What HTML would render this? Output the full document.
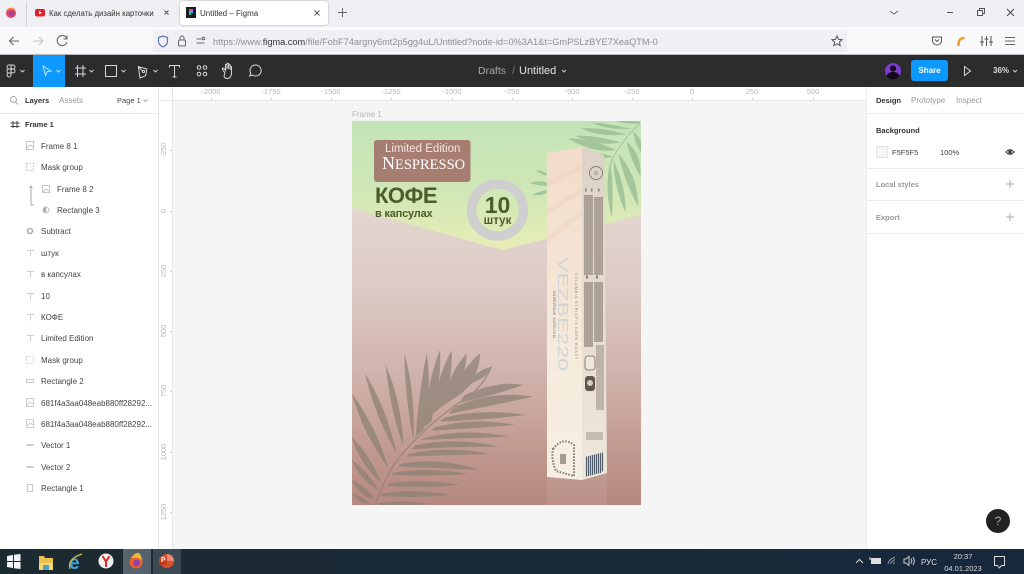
<!DOCTYPE html>
<html><head><meta charset="utf-8"><title>Untitled – Figma</title>
<style>
html,body{margin:0;padding:0;width:1024px;height:574px;overflow:hidden;background:#fff}
body{font-family:"Liberation Sans","Noto Sans CJK SC",sans-serif;position:relative;filter:blur(.35px)}
.a,.t{position:absolute}
.t{white-space:nowrap;line-height:12px;height:12px}
svg{position:absolute;overflow:visible}
.l{font-size:8px;color:#444;margin-top:1px}
.r{font-size:7.500px;color:#b5b5b5;width:40px;text-align:center}
.v{font-size:7.500px;color:#b5b5b5;width:30px;text-align:center;transform:rotate(-90deg);left:149px}
.i{stroke:#c4c4c4;fill:none;stroke-width:1}
</style></head><body>

<!-- browser chrome -->
<div class="a" style="left:0;top:0;width:1024px;height:27px;background:#f0f0f4"></div>
<div class="a" style="left:0;top:27px;width:1024px;height:27px;background:#f9f9fb"></div>
<div class="a" style="left:153px;top:30px;width:694px;height:22px;background:#f0f0f4"></div>
<div class="a" style="left:26px;top:2px;width:1px;height:24px;background:#d4d4d8"></div>
<svg style="left:0;top:0" width="1024" height="54">
<circle cx="11" cy="13" r="5" fill="#d9486f"/><circle cx="11.500" cy="13.500" r="2.600" fill="#a33fa0"/><path d="M7 10q4-3 8 0" stroke="#f58a3c" fill="none" stroke-width="1.600"/>
<rect x="35" y="9" width="10" height="7.500" rx="2" fill="#e3202a"/><path d="M39 11l3 1.700-3 1.700z" fill="#fff"/>
<path d="M164.500 10.500l4 4m0-4l-4 4" stroke="#555" stroke-width="1"/>
<path d="M338 12.500h9M342.500 8v9" stroke="#666" stroke-width="1"/>
<path d="M890 11l4 3 4-3" stroke="#666" fill="none"/>
<path d="M947 12.500h6" stroke="#555"/>
<rect x="977.500" y="10.500" width="5" height="5" fill="none" stroke="#555"/><path d="M979.500 10.500v-2h5v5h-2" fill="none" stroke="#555"/>
<path d="M1007 9l7 7m0-7l-7 7" stroke="#444"/>
<path d="M19 41H9.500m4-4l-4 4 4 4" stroke="#666" fill="none" stroke-width="1.100"/>
<path d="M33 41h10m-4-4l4 4-4 4" stroke="#c4c4c8" fill="none" stroke-width="1.100"/>
<path d="M66.500 38a5 5 0 1 0 .5 4M67 35.500v3.500h-3.500" stroke="#666" fill="none" stroke-width="1.100"/>
<path d="M163 36l4.500 1.500v4c0 3-2.500 4.500-4.500 5.500-2-1-4.500-2.500-4.500-5.500v-4z" fill="none" stroke="#5a74b8" stroke-width="1.200"/>
<rect x="178.500" y="40" width="7" height="6" rx="1" fill="none" stroke="#666"/><path d="M180 40v-2a2 2 0 0 1 4 0v2" fill="none" stroke="#666"/>
<path d="M196.500 39h5M196.500 43h8" stroke="#666"/><circle cx="203.500" cy="38.500" r="1.300" fill="none" stroke="#666"/>
<path d="M837 36l1.500 3.300 3.600.4-2.700 2.400.8 3.500-3.200-1.800-3.200 1.800.8-3.500-2.700-2.400 3.600-.4z" fill="none" stroke="#555"/>
<path d="M932.500 37h9v3.500a4.500 4.500 0 0 1-9 0z" fill="none" stroke="#555"/><path d="M935 39.500l2 2 2-2" fill="none" stroke="#555"/>
<path d="M958.500 46c0-5 1-8 6-8" stroke="#eda32b" fill="none" stroke-width="2.600"/>
<path d="M982 36v10M986.500 36v10M991 36v10" stroke="#555"/><path d="M980 42h4M984.500 39h4M989 42h4" stroke="#555"/>
<path d="M1005 37.500h10M1005 41h10M1005 44.500h10" stroke="#666"/>
</svg>
<div class="a" style="left:180px;top:1px;width:148px;height:24px;background:#fff;border-radius:3px;box-shadow:0 0 2px rgba(0,0,0,.3)"></div>
<svg style="left:0;top:0" width="330" height="27"><rect x="186" y="7" width="10" height="11" fill="#1c1c1c"/><rect x="189" y="9" width="2" height="2" fill="#e9553d"/><rect x="191" y="9" width="2" height="2" fill="#a259ff"/><rect x="189" y="11" width="2" height="2" fill="#1abcfe"/><rect x="191" y="11" width="2" height="2" fill="#1abcfe"/><rect x="189" y="13" width="2" height="2" fill="#0acf83"/><path d="M314.500 10.500l5 5m0-5l-5 5" stroke="#555"/></svg>
<div class="t" style="left:49px;top:8px;font-size:7.800px;color:#333;width:109px;overflow:hidden">Как сделать дизайн карточки</div>
<div class="t" style="left:200px;top:8px;font-size:8px;color:#333">Untitled – Figma</div>
<div class="t" style="left:213px;top:36px;font-size:9.230px;color:#8e8e93">https://www.<span style="color:#333">figma.com</span>/file/FobF74argny6mt2p5gg4uL/Untitled?node-id=0%3A1&amp;t=GmPSLzBYE7XeaQTM-0</div>

<!-- figma toolbar -->
<div class="a" style="left:0;top:54px;width:1024px;height:33px;background:#2c2c2c;border-top:1px solid #bbb;box-sizing:border-box"></div>
<div class="a" style="left:33px;top:55px;width:32px;height:32px;background:#0d99ff"></div>
<svg style="left:0;top:55px" width="1024" height="32" fill="none" stroke="#d8d8d8" stroke-width="1">
<path d="M11 10H9a2 2 0 0 0 0 4h2zM11 10h2a2 2 0 0 1 0 4h-2zM11 14H9a2 2 0 0 0 0 4h2zM11 18H9a2 2 0 1 0 2 2z"/><circle cx="13" cy="16" r="2"/>
<path d="M20.500 15l2 2 2-2M89.500 15l2 2 2-2M121.500 15l2 2 2-2M153.500 15l2 2 2-2" stroke-width=".9"/>
<path d="M77.500 10v12M83 10v12M75 13h11M75 19h11"/>
<rect x="105.500" y="10.500" width="11" height="11"/>
<path d="M139 11l8 3.500-2 6.500-6 1.500z M139 11l3.500 5" transform="rotate(-8 143 16)"/><circle cx="143.500" cy="16.500" r="1.100"/>
<path d="M169.500 12.500v-2h10v2M174.500 10.500v11.500M172.500 22h4"/>
<circle cx="199" cy="12.500" r="1.800"/><circle cx="205" cy="12.500" r="1.800"/><circle cx="199" cy="19" r="1.800"/><circle cx="205" cy="19" r="1.800"/>
<path d="M225 18l-2.500-3.500c-.7-1 .6-1.800 1.400-.9l1.600 2V10c0-1 1.500-1 1.500 0v4-5c0-1 1.600-1 1.600 0v5-4c0-1 1.500-1 1.500 0v5-3c0-1 1.400-1 1.400 0v6c0 3-1.500 5.500-4 5.500s-3-1-3.500-2.500z"/>
<path d="M255.500 10a5.500 5.500 0 1 1-3 10l-2.800 1 1-2.800a5.500 5.500 0 0 1 4.800-8.200z"/>
<path d="M562 15l2 2 2-2" stroke="#ccc"/>
<path d="M964.500 11.500l6 4.500-6 4.500z"/>
<path d="M1013 15l2 2 2-2" stroke="#ccc"/>
<circle cx="893" cy="16" r="8" fill="#7b3bd1" stroke="none"/><circle cx="893" cy="13.500" r="3.100" fill="#170a22" stroke="none"/><path d="M886.500 21c1-3 3.500-4 6.500-4s5.500 1 6.500 4a8 8 0 0 1-13 0z" fill="#120818" stroke="none"/>
</svg>
<svg style="left:33px;top:55px" width="32" height="32" fill="none" stroke="#bfe3ff"><path d="M10 11l8 5-4 .7-1.500 3.800z"/><path d="M23.500 15l2 2 2-2"/></svg>
<div class="t" style="left:478px;top:65px;font-size:10.500px;color:#a8a8a8">Drafts</div>
<div class="t" style="left:512px;top:65px;font-size:11px;color:#777">/</div>
<div class="t" style="left:519px;top:65px;font-size:11px;color:#e4e4e4">Untitled</div>
<div class="a" style="left:911px;top:60px;width:37px;height:21px;background:#0d99ff;border-radius:3px;color:#fff;font-size:8px;font-weight:bold;line-height:21px;text-align:center">Share</div>
<div class="t" style="left:993px;top:65px;font-size:8px;font-weight:bold;color:#ddd">36%</div>

<!-- left panel -->
<div class="a" style="left:0;top:87px;width:158px;height:462px;background:#fff;border-right:1px solid #e5e5e5"></div>
<div class="a" style="left:0;top:113px;width:158px;height:1px;background:#e8e8e8"></div>
<svg style="left:0;top:87px" width="158" height="30"><circle cx="13.500" cy="12.500" r="3" fill="none" stroke="#aaa"/><path d="M15.500 15l2.500 2.500M143.500 12.500l2 2 2-2" stroke="#aaa" fill="none"/></svg>
<div class="t" style="left:25px;top:95px;font-size:7.500px;font-weight:bold;color:#333">Layers</div>
<div class="t" style="left:59px;top:95px;font-size:8px;color:#999">Assets</div>
<div class="t" style="left:117px;top:95px;font-size:7.500px;color:#444">Page 1</div>

<svg style="left:0;top:0" width="60" height="500">
<path d="M13 121v7M17 121v7M10.500 123h9M10.500 126.500h9" stroke="#444" fill="none"/>
<g class="i">
<rect x="26.500" y="141.500" width="7" height="8"/><path d="M27 148l3-3 3 2"/>
<rect x="26.500" y="163.500" width="7" height="7" stroke-dasharray="1.500 1.500"/>
<path d="M31 186v19h3M29.500 188l1.500-2 1.500 2" stroke="#aaa"/>
<rect x="42.500" y="185.500" width="7" height="7"/><path d="M43 192l3-3 3 2"/>
<circle cx="46" cy="210" r="3"/><path d="M46 207a3 3 0 0 0 0 6z" fill="#aaa"/>
<circle cx="30" cy="231" r="2.500" stroke="#aaa" stroke-width="1.500"/>
</g>
<g fill="none" stroke="#ccc">
<path d="M27 250.500h7M30.500 250.500v6M27 271.500h7M30.500 271.500v6M27 293.500h7M30.500 293.500v6M27 314.500h7M30.500 314.500v6M27 335.500h7M30.500 335.500v6"/>
<rect x="26.500" y="356.500" width="7" height="7" stroke-dasharray="1.500 1.500"/>
<rect x="26.500" y="379.500" width="7" height="3"/>
<rect x="26.500" y="398.500" width="7" height="8"/><path d="M27 405l3-3 3 2"/>
<rect x="26.500" y="419.500" width="7" height="8"/><path d="M27 426l3-3 3 2"/>
<path d="M26.500 445h7M26.500 467h7" stroke-width="2"/>
<rect x="27.500" y="484.500" width="5" height="7"/>
</g></svg>
<div class="t l" style="left:25px;top:118px;font-weight:bold;color:#333;font-size:7.500px">Frame 1</div>
<div class="t l" style="left:41px;top:140px">Frame 8 1</div>
<div class="t l" style="left:41px;top:161px">Mask group</div>
<div class="t l" style="left:57px;top:183px">Frame 8 2</div>
<div class="t l" style="left:57px;top:204px">Rectangle 3</div>
<div class="t l" style="left:41px;top:225px">Subtract</div>
<div class="t l" style="left:41px;top:247px">штук</div>
<div class="t l" style="left:41px;top:268px">в капсулах</div>
<div class="t l" style="left:41px;top:290px">10</div>
<div class="t l" style="left:41px;top:311px">КОФЕ</div>
<div class="t l" style="left:41px;top:332px">Limited Edition</div>
<div class="t l" style="left:41px;top:354px">Mask group</div>
<div class="t l" style="left:41px;top:375px">Rectangle 2</div>
<div class="t l" style="left:41px;top:397px">681f4a3aa048eab880ff28292...</div>
<div class="t l" style="left:41px;top:418px">681f4a3aa048eab880ff28292...</div>
<div class="t l" style="left:41px;top:439px">Vector 1</div>
<div class="t l" style="left:41px;top:461px">Vector 2</div>
<div class="t l" style="left:41px;top:482px">Rectangle 1</div>

<!-- canvas + rulers -->
<div class="a" style="left:159px;top:87px;width:707px;height:462px;background:#fff"></div>
<div class="a" style="left:173px;top:101px;width:693px;height:448px;background:#f5f5f5"></div>
<div class="a" style="left:159px;top:100px;width:707px;height:1px;background:#e6e6e6"></div>
<div class="a" style="left:172px;top:87px;width:1px;height:462px;background:#e6e6e6"></div>
<div class="t r" style="left:191px;top:86px">-2000</div>
<div class="t r" style="left:251px;top:86px">-1750</div>
<div class="t r" style="left:311px;top:86px">-1500</div>
<div class="t r" style="left:371px;top:86px">-1250</div>
<div class="t r" style="left:432px;top:86px">-1000</div>
<div class="t r" style="left:492px;top:86px">-750</div>
<div class="t r" style="left:552px;top:86px">-500</div>
<div class="t r" style="left:612px;top:86px">-250</div>
<div class="t r" style="left:672px;top:86px">0</div>
<div class="t r" style="left:732px;top:86px">250</div>
<div class="t r" style="left:793px;top:86px">500</div>
<div class="t v" style="top:144px">-250</div>
<div class="t v" style="top:205px">0</div>
<div class="t v" style="top:265px">250</div>
<div class="t v" style="top:325px">500</div>
<div class="t v" style="top:385px">750</div>
<div class="t v" style="top:446px">1000</div>
<div class="t v" style="top:506px">1250</div>
<svg style="left:159px;top:87px" width="660" height="440" stroke="#ccc">
<path d="M52.500 11v2M112.500 11v2M172.500 11v2M232.500 11v2M293.500 11v2M353.500 11v2M413.500 11v2M473.500 11v2M533.500 11v2M593.500 11v2M654.500 11v2"/>
<path d="M11 63.500h2M11 124.500h2M11 184.500h2M11 244.500h2M11 304.500h2M11 365.500h2M11 425.500h2"/>
</svg>

<!-- frame -->
<div class="t" style="left:352px;top:109px;font-size:8px;color:#b8b8b8">Frame 1</div>
<div class="a" style="left:352px;top:121px;width:289px;height:384px;overflow:hidden;background:linear-gradient(180deg,#e6dbd4 0,#e3d7d0 22%,#dcc9c3 45%,#cdaea7 70%,#bf968d 88%,#b5897f 100%)">
<svg style="left:-352px;top:-121px" width="1024" height="574">
<defs><linearGradient id="g" x1="0" y1="121" x2="0" y2="250" gradientUnits="userSpaceOnUse"><stop offset="0" stop-color="#c3e4b8"/><stop offset=".55" stop-color="#d0e7b6"/><stop offset="1" stop-color="#e8edb6"/></linearGradient>
<linearGradient id="f" x1="0" y1="150" x2="0" y2="480" gradientUnits="userSpaceOnUse"><stop offset="0" stop-color="#f3dcc9"/><stop offset=".3" stop-color="#f4e3d3"/><stop offset=".65" stop-color="#f5ebdd"/><stop offset="1" stop-color="#f6efe3"/></linearGradient>
<linearGradient id="s" x1="0" y1="147" x2="0" y2="477" gradientUnits="userSpaceOnUse"><stop offset="0" stop-color="#ddd2c7"/><stop offset=".5" stop-color="#e6dccf"/><stop offset="1" stop-color="#eee7dc"/></linearGradient>
<pattern id="n" width="3" height="2" patternUnits="userSpaceOnUse"><rect width="3" height="2" fill="#a99e92"/><rect width="1.500" height="1" fill="#b6ab9f"/></pattern></defs>
<path d="M352 121H641V215L502 250 352 208z" fill="url(#g)"/>

<!-- top green palm -->
<g transform="translate(345 105) scale(.3333)" fill="#9cc096" opacity=".85">
<path d="M885 55Q835 100 800 165Q780 240 800 330" fill="none" stroke="#9cc096" stroke-width="3"/>
<path d="M885 50Q850 42 815 50Q850 58 885 55z"/>
<path d="M860 72Q790 55 735 52Q790 76 860 72z"/>
<path d="M845 88Q770 66 708 70Q770 98 845 88z"/>
<path d="M828 112Q750 90 690 92Q760 126 828 112z"/>
<path d="M812 135Q740 100 670 100Q740 145 812 135z"/>
<path d="M804 155Q760 140 720 138Q760 168 804 155z"/>
<path d="M795 175Q778 250 800 338Q808 250 795 175z"/>
<path d="M805 165Q808 250 842 322Q842 240 805 165z"/>
<path d="M820 145Q838 230 880 305Q880 215 820 145z"/>
<path d="M845 110Q855 160 886 215Q892 150 845 110z"/>
<path d="M865 80Q870 120 888 140Q895 100 865 80z"/>
<path d="M605 205Q590 195 572 196Q590 209 605 212z"/>
<path d="M605 232Q580 225 553 234Q580 243 605 242z"/>
<path d="M605 255Q580 260 560 270Q585 272 605 265z"/>
</g>

<!-- bottom palm -->
<g transform="translate(345 340) scale(.3333)" fill="#8c8174" opacity=".72">
<path d="M90 495Q120 410 160 355Q240 260 340 190Q410 150 440 80" fill="none" stroke="#8c8174" stroke-width="4"/>
<path d="M130 385Q95 262 20 160Q55 282 130 385z"/>
<path d="M155 340Q125 205 60 100Q90 230 155 340z"/>
<path d="M175 320Q170 185 122 75Q135 205 175 320z"/>
<path d="M205 300Q212 160 178 40Q180 175 205 300z"/>
<path d="M235 270Q262 150 245 40Q222 155 212 290z"/>
<path d="M258 245Q290 135 285 30Q245 130 238 260z"/>
<path d="M290 200Q325 115 320 32Q275 110 265 220z"/>
<path d="M320 180Q365 105 365 40Q310 100 290 200z"/>
<path d="M350 160Q405 105 405 40Q345 90 320 180z"/>
<path d="M380 130Q430 110 440 80Q385 90 350 160z"/>
<path d="M110 430Q75 345 20 290Q45 375 110 430z"/>
<path d="M100 450Q70 395 20 360Q45 420 100 450z"/>
<path d="M90 480Q65 440 20 420Q40 465 90 480z"/>
<path d="M80 495Q55 470 20 460Q40 490 80 495z"/>
<path d="M360 165Q460 120 535 135Q450 165 340 190z"/>
<path d="M330 200Q450 150 565 170Q450 195 310 222z"/>
<path d="M300 232Q420 205 540 225Q420 240 285 245z"/>
<path d="M270 262Q390 230 510 255Q390 265 258 272z"/>
<path d="M235 295Q360 262 490 290Q360 295 228 300z"/>
<path d="M210 316Q335 290 460 320Q335 320 200 328z"/>
<path d="M190 342Q310 315 435 342Q310 345 185 350z"/>
<path d="M165 372Q285 350 405 390Q285 385 160 380z"/>
<path d="M145 398Q260 380 370 402Q260 410 140 405z"/>
<path d="M130 430Q240 415 345 435Q240 445 125 438z"/>
<path d="M115 460Q215 445 315 465Q215 475 110 468z"/>
<path d="M100 490Q175 478 250 492Q175 500 100 496z"/>
</g>

<!-- box reflection -->
<path d="M547 477L582 480 607 473V505H547z" fill="#fff" opacity=".07"/>
<!-- box -->
<path d="M547 153L582 147V480L547 477z" fill="url(#f)"/>
<path d="M582 147L604 155 607 473 582 480z" fill="url(#s)"/>
<g fill="#e6bfa8" opacity=".18">
<path d="M547 180L582 165V170L547 188zM547 208L582 188V194L547 215zM547 236L582 210V216L547 244z"/>
</g>
<circle cx="596" cy="173" r="6.500" fill="none" stroke="#8a7f72"/><circle cx="596" cy="173" r="2.500" fill="#bdb2a6"/>
<path d="M585 190h1.500M591 190h1.500M598 190h1.500" stroke="#8a7f72" stroke-width="3"/>
<rect x="584" y="195" width="9" height="80" fill="url(#n)"/><rect x="594" y="197" width="9" height="78" fill="url(#n)"/>
<rect x="584" y="282" width="9" height="65" fill="url(#n)"/><rect x="594" y="282" width="9" height="60" fill="url(#n)"/>
<path d="M586 277h2M596 277h2" stroke="#8a7f72" stroke-width="3"/>
<rect x="596" y="345" width="8" height="65" fill="url(#n)" opacity=".7"/>
<rect x="585" y="356" width="10" height="14" rx="3" fill="#eee6da" stroke="#8a7f72"/>
<rect x="585" y="376" width="10" height="15" rx="3" fill="#5f574e"/><circle cx="590" cy="383" r="3" fill="#d6ccbf"/>
<rect x="586" y="432" width="17" height="8" fill="#a69a8e" opacity=".55"/>
<!-- barcode -->
<path d="M585 456L604 452V472L585 477z" fill="#f0ece6"/>
<path d="M586.500 456.500v20M588.500 456v20M590.500 455.500v20M592.500 455v20M594.500 454.500v20M596.500 454v20M598.500 453.500v20M600.500 453v20M602.500 452.500v19" stroke="#4f5a68" stroke-width="1.200"/>
<!-- dotted badge -->
<path d="M553 449Q563 436 574 445L574 476 556 471Q551 460 553 449z" fill="none" stroke="#7f7568" stroke-width="2" stroke-dasharray="1.500 1.500"/>
<rect x="560" y="454" width="6" height="10" fill="#a69a8e"/>
<!-- box rotated text -->
<text transform="translate(558 257) rotate(90)" font-family="Liberation Sans" font-size="15" fill="#d2d3d6" textLength="114" lengthAdjust="spacingAndGlyphs">VEZBE220</text>
<text transform="translate(553 291) rotate(90)" font-family="Liberation Sans" font-size="3.500" fill="#6f665c" letter-spacing=".6">КОФЕЙНЫЕ КАПСУЛЫ</text>
<text transform="translate(575 273) rotate(90)" font-family="Liberation Sans" font-size="3.500" fill="#8f8679" letter-spacing="1">COLOMBIA ETHIOPIA DARK ROAST</text>

<!-- ring -->
<circle cx="497.500" cy="210" r="26" fill="none" stroke="#cfcfcf" stroke-width="9.400"/>
<rect x="374" y="140" width="96.500" height="42" rx="3" fill="#a67d71"/>
</svg>
<div class="t" style="left:33px;top:21px;font-size:11.500px;color:#f2e6e0;line-height:14px;height:14px">Limited Edition</div>
<div class="t" style="left:30px;top:33px;font-family:'Liberation Serif',serif;font-size:14.500px;color:#fff;line-height:19px;height:19px"><span style="font-size:18px;line-height:19px">N</span>ESPRESSO</div>
<div class="t" style="left:23px;top:61px;font-size:22px;font-weight:bold;color:#4c5b2a;line-height:28px;height:28px;letter-spacing:-.5px">КОФЕ</div>
<div class="t" style="left:23px;top:86px;font-size:11px;color:#4c5b2a;line-height:14px;height:14px;font-weight:bold;letter-spacing:-.2px">в капсулах</div>
<div class="t" style="left:115.500px;top:69px;width:60px;text-align:center;font-size:23px;font-weight:bold;color:#4c5b2a;line-height:30px;height:30px">10</div>
<div class="t" style="left:115.500px;top:93px;width:60px;text-align:center;font-size:11.500px;font-weight:bold;color:#4c5b2a;line-height:14px;height:14px">штук</div>
</div>

<!-- right panel -->
<div class="a" style="left:866px;top:87px;width:158px;height:462px;background:#fff;border-left:1px solid #ececec;box-sizing:border-box"></div>
<div class="a" style="left:866px;top:113px;width:158px;height:1px;background:#ececec"></div>
<div class="a" style="left:866px;top:168px;width:158px;height:1px;background:#ececec"></div>
<div class="a" style="left:866px;top:200px;width:158px;height:1px;background:#ececec"></div>
<div class="a" style="left:866px;top:233px;width:158px;height:1px;background:#ececec"></div>
<div class="t" style="left:876px;top:95px;font-size:7.500px;font-weight:bold;color:#333">Design</div>
<div class="t" style="left:911px;top:95px;font-size:8px;color:#999">Prototype</div>
<div class="t" style="left:956px;top:95px;font-size:8px;color:#999">Inspect</div>
<div class="t" style="left:876px;top:125px;font-size:7.500px;font-weight:bold;color:#333">Background</div>
<div class="a" style="left:876px;top:146px;width:10px;height:10px;background:#f5f5f5;border:1px solid #e3e3e3"></div>
<div class="t" style="left:892px;top:147px;font-size:7.500px;color:#444">F5F5F5</div>
<div class="t" style="left:940px;top:147px;font-size:7.500px;color:#444">100%</div>
<div class="t" style="left:876px;top:179px;font-size:7.500px;font-weight:bold;color:#999">Local styles</div>
<div class="t" style="left:876px;top:212px;font-size:7.500px;font-weight:bold;color:#999">Export</div>
<svg style="left:1000px;top:140px" width="24" height="90" fill="none"><path d="M6 12q4-4.500 8 0q-4 4.500-8 0z" stroke="#333"/><circle cx="10" cy="12" r="1.700" fill="#333"/><path d="M10 40v8M6 44h8M10 73v8M6 77h8" stroke="#aaa"/></svg>
<div class="a" style="left:986px;top:509px;width:24px;height:24px;border-radius:50%;background:#222;color:#aaa;font-size:12px;line-height:24px;text-align:center">?</div>

<!-- taskbar -->
<div class="a" style="left:0;top:549px;width:1024px;height:25px;background:linear-gradient(90deg,#1c2a31 0,#1a2a38 50%,#17283d 100%)"></div>
<div class="a" style="left:123px;top:549px;width:28px;height:25px;background:#55636d"></div>
<div class="a" style="left:153px;top:549px;width:28px;height:25px;background:#3a4952"></div>
<svg style="left:0;top:549px" width="1024" height="25">
<path d="M7 7l6-1v6H7zM14 5.800L20.500 5v7H14zM7 13h6v6l-6-1zM14 13h6.500v7L14 19.200z" fill="#f0f4f8"/>
<path d="M39 7h5l1 2h8v12H39z" fill="#e9c04f"/><rect x="39" y="14" width="14" height="7" fill="#f4d977"/><rect x="43" y="16" width="6" height="5" fill="#4f9fc2"/>
<text x="69" y="20" font-family="Liberation Sans" font-size="19" font-weight="bold" fill="#3ea7de">e</text><path d="M70 20q-3-10 12-15" stroke="#e3b93d" fill="none" stroke-width="1.200"/>
<circle cx="106" cy="12" r="7.500" fill="#f2f2f2"/><path d="M102.500 7l3.500 5.500 3.500-5.500M106 12.500V18" stroke="#e2292a" stroke-width="2" fill="none"/>
<circle cx="136" cy="13" r="6.500" fill="#e8602e"/><circle cx="136.500" cy="14" r="3.300" fill="#8a3fb3"/><path d="M131 9q4-6 8-5 3 3 3 8-3-4-7-3z" fill="#f5b52e"/>
<circle cx="167" cy="12" r="7" fill="#d9502e"/><path d="M167 5a7 7 0 0 1 7 7h-7z" fill="#e98a6f"/><rect x="159" y="8" width="8" height="8" rx="1" fill="#c23d1e"/>
<path d="M856 14l3.500-3.500L863 14" stroke="#ddd" fill="none"/>
<rect x="871.500" y="9.500" width="9" height="5" fill="#ddd" stroke="#ddd"/><path d="M870 8v3" stroke="#ddd"/>
<path d="M888 15q1-5 7-7M890.500 15q1-3 4.500-4.500M893 15q.5-1 2-2" stroke="#8f99a3" fill="none"/>
<path d="M904 10h2l3-2.500v9L906 14h-2zM911 9.500q1.500 2.500 0 5M913 8q2.500 4 0 8" stroke="#ccc" fill="none"/>
<path d="M994.500 7.500h10v9h-3l-2 2.500-2-2.500h-3z" fill="none" stroke="#ddd"/>
</svg>
<div class="t" style="left:921px;top:557px;font-size:8px;color:#ddd">РУС</div>
<div class="t" style="left:933px;top:551px;width:60px;text-align:center;font-size:7.500px;color:#ddd">20:37</div>
<div class="t" style="left:933px;top:563px;width:60px;text-align:center;font-size:7.500px;color:#ddd">04.01.2023</div>
<div class="a" style="left:161px;top:556px;font-size:7px;font-weight:bold;color:#fff;line-height:10px">P</div>
</body></html>
